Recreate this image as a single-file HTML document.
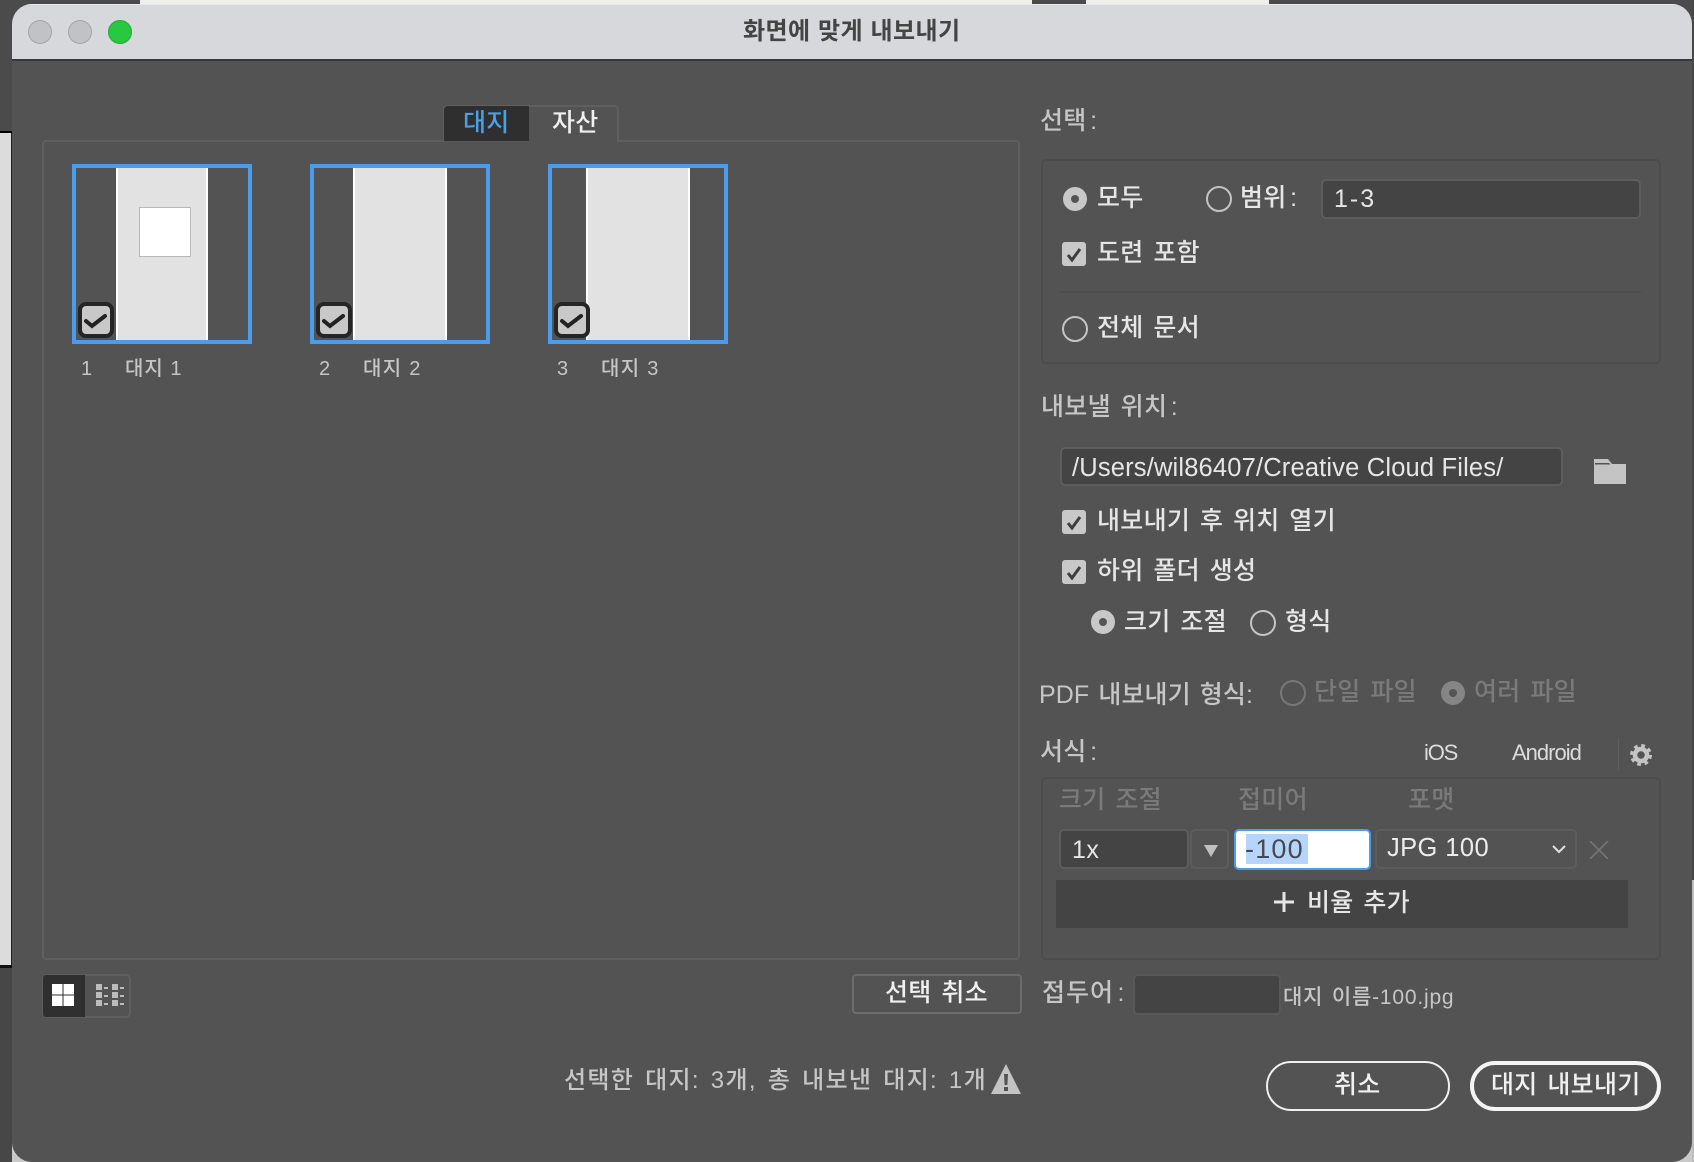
<!DOCTYPE html>
<html lang="ko"><head><meta charset="utf-8"><title>화면에 맞게 내보내기</title>
<style>
*{box-sizing:border-box}
html,body{margin:0;padding:0;width:1694px;height:1162px;overflow:hidden;background:#c9c9c9}
body{position:relative;font-family:"Liberation Sans","Noto Sans CJK KR",sans-serif}
div,span.a,svg{position:absolute}
.t{white-space:nowrap;font-size:25px;line-height:30px;height:30px;letter-spacing:.3px;word-spacing:2.5px;color:#e6e6e6;margin-top:1.5px;font-weight:500}
.t i{font-style:normal;margin-left:3.5px}
.l{color:#c6c6c6}
.d{color:#7a7a7a}
.box{border:2px solid #4c4c4c;border-radius:5px}
.inp{background:#444;border:2px solid #5d5d5d;border-radius:5px}
.r{width:26px;height:26px;border:2px solid #c4c4c4;border-radius:50%}
.rf{width:24px;height:24px;background:#c8c8c8;border-radius:50%}
.rf:after{content:"";position:absolute;left:8px;top:8px;width:8px;height:8px;border-radius:50%;background:#555}
.c{width:24px;height:24px;background:#c8c8c8;border-radius:3px}
.th{width:180px;height:180px;border:4px solid #4a9ced;top:164px;background:#535353}
.pg{top:0;height:172px;background:#e2e2e2;border-left:2px solid #fff;border-right:2px solid #fff}
.ck{width:36px;height:36px;top:302px;background:#c8c8c8;border:4px solid #252525;border-radius:8px}
</style></head><body>
<div style="left:0;top:0;width:1694px;height:131px;background:#4b4b4b"></div>
<div style="left:0;top:131px;width:12px;height:2px;background:#000"></div>
<div style="left:0;top:133px;width:11px;height:832px;background:#dcdcdc"></div>
<div style="left:11px;top:133px;width:1px;height:834px;background:#222"></div>
<div style="left:0;top:965px;width:12px;height:3px;background:#111"></div>
<div style="left:0;top:968px;width:12px;height:194px;background:#474747"></div>
<div style="left:140px;top:0;width:892px;height:4px;background:#eeeeea"></div>
<div style="left:1086px;top:0;width:183px;height:4px;background:#eeeeea"></div>
<div style="left:1692px;top:0;width:2px;height:880px;background:#484848"></div>
<div style="left:1692px;top:880px;width:2px;height:282px;background:#bdbdbd"></div>

<!-- window -->
<div style="left:12px;top:4px;width:1680px;height:1158px;background:#535353;border-radius:20px 20px 20px 20px;overflow:hidden">
  <div style="left:0;top:0;width:1680px;height:57px;background:#d7d8db;border-bottom:2px solid #36383a;box-shadow:inset 0 1px 0 #e9e9ea"></div>
</div>
<div style="left:28px;top:20px;width:24px;height:24px;border-radius:50%;background:#c1c2c5;border:1px solid #a4a5a8"></div>
<div style="left:68px;top:20px;width:24px;height:24px;border-radius:50%;background:#c1c2c5;border:1px solid #a4a5a8"></div>
<div style="left:108px;top:20px;width:24px;height:24px;border-radius:50%;background:#28c840;border:1px solid #20a936"></div>
<div class="t" style="left:743px;top:15px;color:#444;font-weight:700;font-size:24px;letter-spacing:.4px;word-spacing:.5px">화면에 맞게 내보내기</div>

<!-- left panel -->
<div style="left:42px;top:140px;width:978px;height:820px;border:2px solid #5f5f5f;border-radius:4px"></div>
<div style="left:443px;top:105px;width:176px;height:37px;background:#535353;border:2px solid #5f5f5f;border-bottom:0;border-radius:5px 5px 0 0"></div>
<div style="left:444px;top:106px;width:85px;height:35px;background:#2f2f2f;border-radius:4px 0 0 0"></div>
<div class="t" style="left:463px;top:106px;color:#4a9fe6">대지</div>
<div class="t" style="left:552px;top:106px;color:#f0f0f0">자산</div>

<div class="th" style="left:72px"><div class="pg" style="left:40px;width:92px"><div style="left:21px;top:39px;width:52px;height:50px;background:#fff;border:1px solid #b8b8b8"></div></div></div>
<div class="th" style="left:310px"><div class="pg" style="left:39px;width:94px"></div></div>
<div class="th" style="left:548px"><div class="pg" style="left:34px;width:104px"></div></div>
<div class="ck" style="left:78px"><svg width="28" height="28" viewBox="0 0 28 28" style="left:0;top:0"><path d="M4 15l6 5L23 10" fill="none" stroke="#222" stroke-width="4" stroke-linecap="round"/></svg></div>
<div class="ck" style="left:316px"><svg width="28" height="28" viewBox="0 0 28 28" style="left:0;top:0"><path d="M4 15l6 5L23 10" fill="none" stroke="#222" stroke-width="4" stroke-linecap="round"/></svg></div>
<div class="ck" style="left:554px"><svg width="28" height="28" viewBox="0 0 28 28" style="left:0;top:0"><path d="M4 15l6 5L23 10" fill="none" stroke="#222" stroke-width="4" stroke-linecap="round"/></svg></div>
<div class="t l" style="left:81px;top:352px;font-size:20px;letter-spacing:1px">1</div>
<div class="t l" style="left:125px;top:352px;font-size:20px;letter-spacing:1px;word-spacing:0">대지 1</div>
<div class="t l" style="left:319px;top:352px;font-size:20px;letter-spacing:1px">2</div>
<div class="t l" style="left:363px;top:352px;font-size:20px;letter-spacing:1.300px;word-spacing:0">대지 2</div>
<div class="t l" style="left:557px;top:352px;font-size:20px;letter-spacing:1px">3</div>
<div class="t l" style="left:601px;top:352px;font-size:20px;letter-spacing:1.300px;word-spacing:0">대지 3</div>

<!-- view toggle -->
<div style="left:42px;top:974px;width:89px;height:44px;border:2px solid #5f5f5f;border-radius:5px"></div>
<div style="left:43px;top:975px;width:42px;height:42px;background:#2f2f2f;border-radius:3px 0 0 3px"></div>
<svg width="22" height="22" style="left:52px;top:984px"><path fill="#fff" d="M0 0h10.500v10.500H0zM11.500 0H22v10.500H11.500zM0 11.500h10.500V22H0zM11.500 11.500H22V22H11.500z"/></svg>
<svg width="30" height="24" style="left:96px;top:984px"><path fill="#bcbcbc" d="M0 0h6v6H0zM8 3h4v2H8zM16 0h6v6h-6zM24 3h4v2h-4zM0 8h6v6H0zM8 11h4v2H8zM16 8h6v6h-6zM24 11h4v2h-4zM0 16h6v6H0zM8 19h4v2H8zM16 16h6v6h-6zM24 19h4v2h-4z"/></svg>

<div style="left:852px;top:974px;width:170px;height:40px;border:2px solid #6c6c6c;border-radius:4px"></div>
<div class="t" style="left:885px;top:976px;color:#f0f0f0">선택 취소</div>

<div class="t l" style="left:564px;top:1064px;font-size:24px;word-spacing:3px;letter-spacing:1.300px">선택한 대지: 3개, 총 내보낸 대지: 1개</div>
<svg width="32" height="32" style="left:990px;top:1063px"><path fill="#c4c4c4" d="M16 1L31 31H1z"/><path fill="#535353" d="M14 11h4l-.6 11h-2.800zM14 24h4v4h-4z"/></svg>

<!-- right -->
<div class="t l" style="left:1040px;top:104px">선택<i>:</i></div>
<div class="box" style="left:1041px;top:159px;width:620px;height:205px"></div>
<div class="rf" style="left:1063px;top:187px"></div>
<div class="t" style="left:1097px;top:181px">모두</div>
<div class="r" style="left:1206px;top:186px"></div>
<div class="t" style="left:1240px;top:181px">범위<i>:</i></div>
<div class="inp" style="left:1321px;top:179px;width:320px;height:40px"></div>
<div class="t" style="left:1334px;top:182px;letter-spacing:2px">1-3</div>
<div class="c" style="left:1062px;top:242px"><svg width="24" height="24" style="left:0;top:0"><path d="M6 13l4 5 8-11" fill="none" stroke="#3e3e3e" stroke-width="3"/></svg></div>
<div class="t" style="left:1097px;top:236px">도련 포함</div>
<div style="left:1060px;top:291px;width:581px;height:2px;background:#4d4d4d"></div>
<div class="r" style="left:1062px;top:316px"></div>
<div class="t" style="left:1097px;top:311px">전체 문서</div>

<div class="t l" style="left:1041px;top:390px">내보낼 위치<i>:</i></div>
<div class="inp" style="left:1060px;top:447px;width:503px;height:39px"></div>
<div class="t" style="left:1072px;top:451px;font-size:25.500px;letter-spacing:.17px;word-spacing:0;font-weight:400">/Users/wil86407/Creative Cloud Files/</div>
<svg width="32" height="26" style="left:1594px;top:458px"><path fill="#c4c4c4" d="M0 26V1h14l4 5h14v20z"/><path fill="#535353" d="M1 5h14l1.500 1.500H1z"/></svg>

<div class="c" style="left:1062px;top:510px"><svg width="24" height="24" style="left:0;top:0"><path d="M6 13l4 5 8-11" fill="none" stroke="#3e3e3e" stroke-width="3"/></svg></div>
<div class="t" style="left:1097px;top:504px">내보내기 후 위치 열기</div>
<div class="c" style="left:1062px;top:560px"><svg width="24" height="24" style="left:0;top:0"><path d="M6 13l4 5 8-11" fill="none" stroke="#3e3e3e" stroke-width="3"/></svg></div>
<div class="t" style="left:1097px;top:554px">하위 폴더 생성</div>
<div class="rf" style="left:1091px;top:610px"></div>
<div class="t" style="left:1124px;top:605px">크기 조절</div>
<div class="r" style="left:1250px;top:610px"></div>
<div class="t" style="left:1285px;top:605px">형식</div>

<div class="t l" style="left:1039px;top:678px;word-spacing:2px;letter-spacing:.1px">PDF 내보내기 형식:</div>
<div class="r" style="left:1280px;top:680px;border-color:#777"></div>
<div class="t d" style="left:1314px;top:675px">단일 파일</div>
<div class="rf" style="left:1441px;top:681px;background:#858585"></div>
<div class="t d" style="left:1474px;top:675px">여러 파일</div>

<div class="t l" style="left:1040px;top:735.500px">서식<i>:</i></div>
<div class="t" style="left:1424px;top:736.500px;font-size:22px;font-weight:400;letter-spacing:-1.200px;color:#dcdcdc">iOS</div>
<div class="t" style="left:1512px;top:736.500px;font-size:22px;font-weight:400;letter-spacing:-1px;color:#dcdcdc">Android</div>
<div style="left:1618px;top:738px;width:1px;height:32px;background:#5f5f5f"></div>
<svg width="24" height="24" viewBox="0 0 24 24" style="left:1629px;top:743px"><circle cx="12" cy="12" r="6" fill="none" stroke="#c4c4c4" stroke-width="4.500"/><circle cx="12" cy="12" r="9.500" fill="none" stroke="#c4c4c4" stroke-width="3" stroke-dasharray="3.730 3.730"/></svg>

<div class="box" style="left:1041px;top:777px;width:620px;height:183px"></div>
<div class="t d" style="left:1059px;top:783px">크기 조절</div>
<div class="t d" style="left:1238px;top:783px">접미어</div>
<div class="t d" style="left:1408px;top:783px">포맷</div>

<div class="inp" style="left:1059px;top:829px;width:130px;height:40px"></div>
<div class="t" style="left:1072px;top:833.500px;letter-spacing:.5px">1x</div>
<div style="left:1190px;top:829px;width:39px;height:40px;border:2px solid #5d5d5d;border-radius:5px"></div>
<svg width="14" height="12" style="left:1204px;top:845px"><path fill="#c0c0c0" d="M0 0h14L7 12z"/></svg>
<div style="left:1234px;top:829px;width:137px;height:41px;background:#fff;border:2px solid #4a9ced;border-radius:5px"></div>
<div style="left:1246px;top:834px;width:62px;height:30px;background:#b5d5ff"></div>
<div class="t" style="left:1245px;top:832.500px;font-size:27px;letter-spacing:1.200px;font-weight:400;color:#4a4a4a">-100</div>
<div style="left:1375px;top:829px;width:202px;height:40px;border:2px solid #5d5d5d;border-radius:5px"></div>
<div class="t" style="left:1387px;top:831.500px;font-size:25.500px;letter-spacing:.4px;word-spacing:0;font-weight:400;color:#ececec">JPG 100</div>
<svg width="16" height="10" style="left:1551px;top:844px"><path d="M2 2l6 6 6-6" fill="none" stroke="#e0e0e0" stroke-width="2"/></svg>
<svg width="20" height="18" style="left:1589px;top:841px"><path d="M1 0l18 18M19 0L1 18" fill="none" stroke="#757575" stroke-width="1.600"/></svg>
<div style="left:1056px;top:880px;width:572px;height:48px;background:#444"></div>
<svg width="20" height="20" style="left:1274px;top:892px"><path d="M10 0v20M0 10h20" fill="none" stroke="#e6e6e6" stroke-width="3"/></svg>
<div class="t" style="left:1307px;top:886px">비율 추가</div>

<div class="t l" style="left:1042px;top:976px;letter-spacing:1px">접두어<i>:</i></div>
<div class="inp" style="left:1133px;top:974px;width:148px;height:41px;border-color:#585858"></div>
<div class="t l" style="left:1283px;top:981.500px;font-size:21px;letter-spacing:.8px;word-spacing:2px">대지 이름-100.jpg</div>

<div style="left:1266px;top:1061px;width:184px;height:50px;border:2px solid #f0f0f0;border-radius:25px"></div>
<div class="t" style="left:1334px;top:1068px;color:#f0f0f0">취소</div>
<div style="left:1470px;top:1061px;width:191px;height:50px;border:4px solid #f4f4f4;border-radius:25px"></div>
<div class="t" style="left:1491px;top:1068px;color:#f0f0f0">대지 내보내기</div>
</body></html>
